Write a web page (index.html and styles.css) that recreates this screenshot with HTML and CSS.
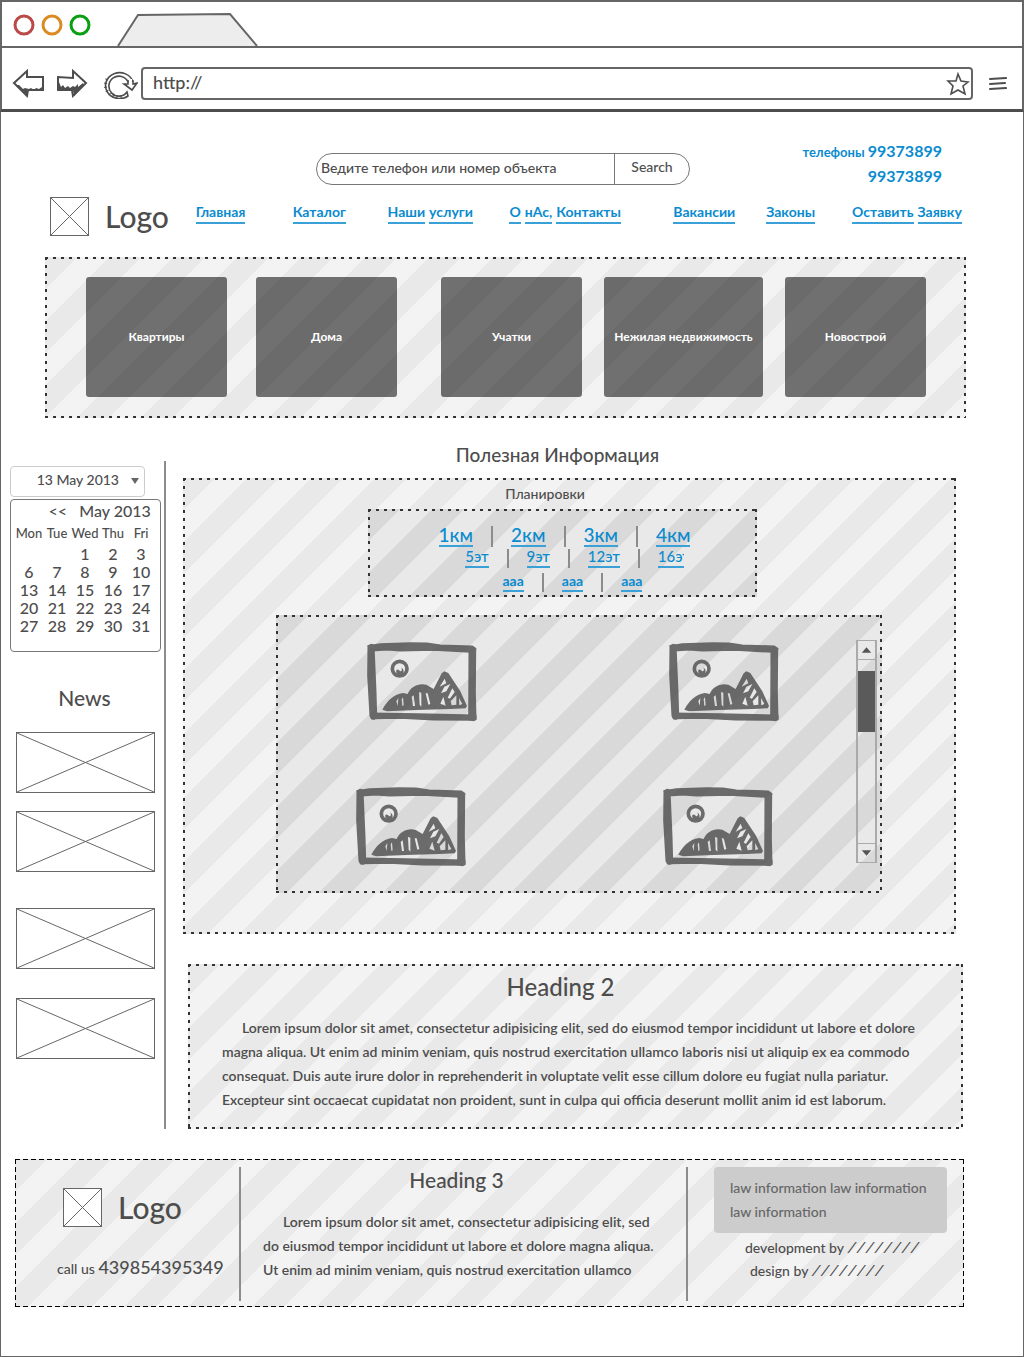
FILE: index.html
```html
<!DOCTYPE html>
<html lang="ru">
<head>
<meta charset="utf-8">
<meta name="viewport" content="width=device-width, initial-scale=1">
<title>Недвижимость</title>
<link rel="stylesheet" href="styles.css">
</head>
<body>
<svg class="defs" aria-hidden="true">
  <symbol id="cross" viewBox="0 0 100 100" preserveAspectRatio="none">
    <path d="M0 0L100 100M100 0L0 100" fill="none" stroke="#666" stroke-width="1" vector-effect="non-scaling-stroke"/>
  </symbol>
  <symbol id="picture" viewBox="0 0 330 240">
    <g fill="#505050" stroke="#505050" stroke-width="5" stroke-linejoin="round">
      <path d="M4 12L12 8L20 10L26 150L28 220L22 231L14 230L10 222L3 100Z"/>
      <path d="M4 12L40 6L130 3L180 4L220 10L316 13L326 20L324 28L310 30L200 24L100 26L60 23L15 26Z"/>
      <path d="M307 28L325 24L324 150L326 232L320 235L306 232Z"/>
      <path d="M12 214L150 216L326 220L326 232L320 234L200 233L100 228L18 229Z"/>
    </g>
    <path d="M46 203C60 178 78 157 108 153L122 156C130 134 155 122 178 128L200 141L224 94L232 88L244 93L280 148L300 192L296 199L250 201L150 204L60 208Z
      M134 164L138 192L144 192L140 160Z M156 150L158 188L163 194L163 152Z M176 154L184 188L190 186L182 154Z
      M233 110L218 134L238 124Z M250 126L232 134L222 154L238 148Z M256 139L242 167L249 170L263 150Z M268 160L251 178L254 190L268 188Z M229 164L220 185L236 191Z M286 186L276 168L277 190Z
      M88 178L94 168L92 192Z M104 172L108 166L110 190L106 192Z" fill="#505050" fill-rule="evenodd"/>
    <circle cx="98" cy="80" r="22" fill="none" stroke="#505050" stroke-width="11"/>
    <path d="M88 84C92 80 96 84 100 88C106 88 106 80 102 76C114 82 112 100 98 100C90 98 86 92 88 84Z" fill="#505050"/>
  </symbol>
</svg>

<header class="browser">
  <div class="tabs">
    <svg class="lights" viewBox="0 0 80 24" aria-hidden="true">
      <g fill="none" stroke-width="3">
        <circle cx="12" cy="12" r="9" stroke="#b94a48"/>
        <circle cx="40" cy="12" r="9" stroke="#dc8a22"/>
        <circle cx="68" cy="12" r="9" stroke="#0a9f10"/>
      </g>
    </svg>
    <svg class="tab" viewBox="0 0 142 34" aria-hidden="true">
      <path d="M1 33L21 2L113 1L140 33" fill="#ededed" stroke="#666" stroke-width="2"/>
    </svg>
  </div>
  <div class="toolbar">
    <svg class="nav-icon" viewBox="0 0 32 30" role="img" aria-label="Назад">
      <path d="M2 14L15 2L15 8L31 8L31 21L16 21L15 27Z" fill="none" stroke="#4d4d4d" stroke-width="2"/>
      <path d="M4 16L15 26L15 20L30 21L30 18L27 20L24 19L22 21L19 19L17 20L13 19L11 20L7 16Z" fill="#4d4d4d"/>
    </svg>
    <svg class="nav-icon forward" viewBox="0 0 32 30" role="img" aria-label="Вперёд">
      <path d="M30 14L17 2L17 9L2 8L2 21L16 21L17 27Z" fill="none" stroke="#4d4d4d" stroke-width="2"/>
      <path d="M3 21L3 13L5 18L7 16L9 19L12 17L14 19L17 17L19 18L22 15L22 18L27 14L28 16L18 27L17 21Z" fill="#4d4d4d"/>
    </svg>
    <svg class="reload" viewBox="0 0 34 30" role="img" aria-label="Обновить">
      <path d="M29 13A14 13 0 1 0 24 27L23 23A10 10 0 1 1 24 13" fill="none" stroke="#4d4d4d" stroke-width="1.6"/>
      <path d="M3 10A12 12 0 0 0 20 26" fill="none" stroke="#4d4d4d" stroke-width="3" stroke-dasharray="1 3"/>
      <path d="M20 15L24 15V12H29V15L33 14L28 21Z" fill="#fff" stroke="#4d4d4d" stroke-width="1.6"/>
      <path d="M25 10H28V15H25Z" fill="#fff"/>
    </svg>
    <div class="address">
      <input type="text" value="http://" aria-label="Адрес">
      <svg class="star" viewBox="0 0 24 24" aria-hidden="true">
        <path d="M12 2L15 9L22 10L17 14L19 22L12 18L5 22L7 14L2 9L10 9Z" fill="none" stroke="#4d4d4d" stroke-width="1.6"/>
      </svg>
    </div>
    <svg class="burger" viewBox="0 0 18 14" role="img" aria-label="Меню">
      <path d="M1 2L17 1M1 7L16 6M1 12L17 11" stroke="#4d4d4d" stroke-width="2" stroke-linecap="round"/>
    </svg>
  </div>
</header>

<div class="site">
  <div class="top">
    <form class="search">
      <input type="text" value="Ведите телефон или номер объекта" aria-label="Поиск">
      <button type="button">Search</button>
    </form>
    <div class="phones">
      <p>телефоны <span>99373899</span></p>
      <p><span>99373899</span></p>
    </div>
  </div>

  <div class="masthead">
    <div class="logo"><svg class="mark"><use href="#cross"/></svg><span>Logo</span></div>
    <nav class="menu">
      <a href="#">Главная</a>
      <a href="#">Каталог</a>
      <a href="#"><span>Наши</span> <span>услуги</span></a>
      <a href="#"><span>О</span> <span>нАс,</span> <span>Контакты</span></a>
      <a href="#">Вакансии</a>
      <a href="#">Законы</a>
      <a href="#"><span>Оставить</span> <span>Заявку</span></a>
    </nav>
  </div>

  <section class="kinds striped">
    <button type="button">Квартиры</button>
    <button type="button">Дома</button>
    <button type="button">Учатки</button>
    <button type="button">Нежилая недвижимость</button>
    <button type="button">Новострой</button>
  </section>

  <div class="columns">
    <aside class="sidebar">
      <button class="date" type="button"><span>13 May 2013</span><svg viewBox="0 0 8 6" aria-hidden="true"><path d="M0 0H8L4 6Z" fill="#666"/></svg></button>
      <div class="calendar">
        <p class="month">&lt;&lt;&nbsp;&nbsp; May 2013 &nbsp;&gt;&gt;</p>
        <table>
          <thead><tr><th>Mon</th><th>Tue</th><th>Wed</th><th>Thu</th><th>Fri</th><th>Sat</th><th>Sun</th></tr></thead>
          <tbody>
            <tr><td></td><td></td><td>1</td><td>2</td><td>3</td><td>4</td><td>5</td></tr>
            <tr><td>6</td><td>7</td><td>8</td><td>9</td><td>10</td><td>11</td><td>12</td></tr>
            <tr><td>13</td><td>14</td><td>15</td><td>16</td><td>17</td><td>18</td><td>19</td></tr>
            <tr><td>20</td><td>21</td><td>22</td><td>23</td><td>24</td><td>25</td><td>26</td></tr>
            <tr><td>27</td><td>28</td><td>29</td><td>30</td><td>31</td><td></td><td></td></tr>
          </tbody>
        </table>
      </div>
      <h2>News</h2>
      <div class="news">
        <svg><use href="#cross"/></svg>
        <svg><use href="#cross"/></svg>
        <svg><use href="#cross"/></svg>
        <svg><use href="#cross"/></svg>
      </div>
    </aside>

    <main>
      <h1>Полезная Информация</h1>
      <section class="plans striped">
        <h2>Планировки</h2>
        <div class="filters striped dark">
          <div class="filter rooms"><a href="#">1км</a><i></i><a href="#">2км</a><i></i><a href="#">3км</a><i></i><a href="#">4км</a></div>
          <div class="filter floors"><a href="#">5эт</a><i></i><a href="#">9эт</a><i></i><a href="#">12эт</a><i></i><a class="cut" href="#">16эт</a></div>
          <div class="filter misc"><a href="#">ааа</a><i></i><a href="#">ааа</a><i></i><a href="#">ааа</a></div>
        </div>
        <div class="gallery striped dark">
          <div class="pictures">
            <svg><use href="#picture"/></svg>
            <svg><use href="#picture"/></svg>
            <svg><use href="#picture"/></svg>
            <svg><use href="#picture"/></svg>
          </div>
          <div class="scrollbar">
            <svg viewBox="0 0 18 18" aria-hidden="true"><path d="M4 12H14L9 6Z" fill="#555"/></svg>
            <div class="track"><div class="thumb"></div></div>
            <svg viewBox="0 0 18 18" aria-hidden="true"><path d="M4 6H14L9 12Z" fill="#555"/></svg>
          </div>
        </div>
      </section>
      <section class="about striped">
        <h2>Heading 2</h2>
        <p>Lorem ipsum dolor sit amet, consectetur adipisicing elit, sed do eiusmod tempor incididunt ut labore et dolore<br>magna aliqua. Ut enim ad minim veniam, quis nostrud exercitation ullamco laboris nisi ut aliquip ex ea commodo<br>consequat. Duis aute irure dolor in reprehenderit in voluptate velit esse cillum dolore eu fugiat nulla pariatur.<br>Excepteur sint occaecat cupidatat non proident, sunt in culpa qui officia deserunt mollit anim id est laborum.</p>
      </section>
    </main>
  </div>

  <footer class="footer striped">
    <div class="contact">
      <div class="logo"><svg class="mark"><use href="#cross"/></svg><span>Logo</span></div>
      <p>call us <span>439854395349</span></p>
    </div>
    <div class="blurb">
      <h3>Heading 3</h3>
      <p>Lorem ipsum dolor sit amet, consectetur adipisicing elit, sed<br>do eiusmod tempor incididunt ut labore et dolore magna aliqua.<br>Ut enim ad minim veniam, quis nostrud exercitation ullamco</p>
    </div>
    <div class="legal">
      <p class="law">law information law information<br>law information</p>
      <p class="credit">development by <span>////////</span></p>
      <p class="credit design">design by <span>////////</span></p>
    </div>
  </footer>
</div>
</body>
</html>
```
FILE: styles.css
```css
* { box-sizing: border-box; }

body {
  margin: 0;
  background: #fff;
  color: #4d4d4d;
  font: 500 14px/24px Lato, "Liberation Sans", sans-serif;
}

h1, h2, h3, p { margin: 0; font-weight: inherit; }
a { color: #0a8bcf; }
button, input { font: inherit; color: inherit; background: none; border: 0; padding: 0; margin: 0; min-width: 0; }
svg { display: block; }
.defs { position: absolute; width: 0; height: 0; }

/* Browser frame */
.browser { border: 2px solid #666; border-bottom: 3px solid #4d4d4d; }
.tabs { display: flex; align-items: flex-end; height: 46px; border-bottom: 2px solid #666; padding-left: 10px; }
.lights { width: 80px; height: 24px; margin-bottom: 9px; }
.tab { width: 142px; height: 34px; margin-left: 25px; margin-bottom: -1px; }
.toolbar { display: flex; align-items: center; height: 61px; padding: 10px 15px 0 10px; }
.nav-icon { width: 32px; height: 30px; }
.forward { margin-left: 12px; }
.reload { width: 34px; height: 30px; margin-left: 16px; }
.address { flex: 1; display: flex; align-items: center; height: 33px; margin: 0 16px 0 3px; border: 2px solid #666; border-radius: 4px; padding: 0 1px 0 10px; }
.address input { flex: 1; padding-bottom: 3px; font-size: 18px; }
.star { width: 24px; height: 24px; }
.burger { width: 18px; height: 14px; }

/* Sketch fills: diagonal stripes inside a dashed outline */
.striped {
  --a: #e9e9e9;
  --b: #f3f3f3;
  --dash: #333 0 3px, transparent 3px 8px;
  --line: 2px;
  background:
    repeating-linear-gradient(90deg, var(--dash)) 0 0 / 100% var(--line) no-repeat,
    repeating-linear-gradient(90deg, var(--dash)) 0 100% / 100% var(--line) no-repeat,
    repeating-linear-gradient(180deg, var(--dash)) 0 0 / var(--line) 100% no-repeat,
    repeating-linear-gradient(180deg, var(--dash)) 100% 0 / var(--line) 100% no-repeat,
    linear-gradient(135deg, var(--a) 25%, var(--b) 25% 50%, var(--a) 50% 75%, var(--b) 75%) 0 0 / 64px 64px;
}
.striped.dark { --a: #d9d9d9; --b: #e9e9e9; }

.site { border: 1px solid #666; border-top: 0; padding: 27px 57px 49px 9px; }

/* Top row */
.top { display: grid; grid-template-columns: 306fr 374fr 252fr; padding: 0 24px 0 0; }
.search { grid-column: 2; display: flex; height: 32px; margin-top: 14px; border: 1px solid #777; border-radius: 16px; }
.search input { flex: 1; padding: 0 0 3px 4px; }
.search button { width: 75px; border-left: 1px solid #777; padding-bottom: 4px; }
.phones { color: #0a8bcf; font-weight: 700; font-size: 13px; text-align: right; line-height: 24px; }
.phones p { height: 25px; }
.phones span { font-size: 16px; }

.masthead { display: grid; grid-template-columns: 186fr 770fr; align-items: center; margin-top: 7px; padding-right: 1px; }
.masthead .logo { padding-left: 40px; }
.logo { display: flex; align-items: center; gap: 16px; font-size: 30px; line-height: 40px; }
.mark { width: 39px; height: 39px; border: 1px solid #666; background: #fff; }
.menu { display: grid; grid-template-columns: 97fr 95fr 122fr 164fr 93fr 86fr 113fr; padding-bottom: 6px; font-weight: 700; line-height: 20px; }
.menu a { display: flex; gap: 4px; justify-self: start; text-decoration: none; border-bottom: 2px solid #3aa0d8; white-space: nowrap; }
.menu a:has(span) { border: 0; }
.menu a span { border-bottom: 2px solid #3aa0d8; }

/* Property kinds */
.kinds { display: grid; grid-template-columns: 141fr 29fr 141fr 44fr 141fr 22fr 159fr 22fr 141fr; margin: 21px 0 0 35px; padding: 20px 40px 21px 41px; }
.kinds button { grid-row: 1; height: 120px; border-radius: 3px; background: rgba(0, 0, 0, .54); color: #fff; font-weight: 700; font-size: 12px; white-space: nowrap; }
.kinds button:nth-child(1) { grid-column: 1; }
.kinds button:nth-child(2) { grid-column: 3; }
.kinds button:nth-child(3) { grid-column: 5; }
.kinds button:nth-child(4) { grid-column: 7; }
.kinds button:nth-child(5) { grid-column: 9; }

/* Sidebar */
.columns { display: flex; margin-top: 23px; }
.sidebar { width: 156px; flex: none; margin-top: 20px; padding-top: 5px; border-right: 2px solid #8c8c8c; }
.date { display: flex; align-items: center; justify-content: flex-end; gap: 12px; width: 135px; height: 31px; border: 1px solid #ccc; border-radius: 4px; padding: 0 5px 4px 0; }
.date svg { width: 8px; height: 6px; margin-top: 3px; }
.calendar { width: 151px; height: 153px; margin-top: 2px; overflow: hidden; border: 1px solid #777; border-radius: 4px; padding: 1px 0 0 4px; }
.month { width: 196px; text-align: center; font-size: 16px; line-height: 20px; }
.calendar table { table-layout: fixed; width: 196px; border-collapse: collapse; text-align: center; }
.calendar th { padding: 0; font-size: 13px; font-weight: inherit; line-height: 24px; }
.calendar td { padding: 0; height: 18px; font-size: 16px; line-height: 18px; }
.calendar th:nth-child(n+6), .calendar td:nth-child(n+6) { color: #b94a48; }
.sidebar h2 { margin-top: 30px; padding-right: 5px; font-size: 21px; line-height: 32px; text-align: center; }
.news { display: grid; grid-template-rows: 79px 97px 90px 61px; margin: 18px 9px 0 6px; }
.news svg { width: 100%; height: 61px; border: 1px solid #666; }

/* Main column */
main { flex: 1; min-width: 0; padding-left: 17px; }
h1 { margin-right: 34px; font-size: 19px; line-height: 28px; text-align: center; }
.plans { margin: 9px 10px 0 0; padding: 5px 74px 41px 93px; }
.plans h2 { padding-right: 68px; font-size: 14px; line-height: 22px; text-align: center; }
.filters { margin: 4px 125px 0 92px; height: 88px; padding: 15px 0 0 0; }
.filter { display: flex; justify-content: center; }
.filter a { text-decoration: none; border-bottom: 2px solid #3aa0d8; white-space: nowrap; }
.filter i { width: 2px; margin: 2px 18px 0; background: #8c8c8c; }
.rooms { padding-left: 4px; font-size: 19px; line-height: 21px; }
.floors { padding-left: 24px; font-size: 15px; line-height: 19px; }
.floors .cut { width: 26px; overflow: hidden; }
.misc { padding: 3px 0 0 20px; font-weight: 700; line-height: 19px; }
.gallery { display: flex; margin-top: 18px; padding: 25px 5px 26px 80px; }
.pictures { flex: 1; display: grid; grid-template-columns: 1fr 1fr; row-gap: 65px; align-content: start; opacity: .82; padding-top: 2px; }
.pictures svg { width: 110px; height: 80px; margin-left: 11px; }
.pictures svg:nth-child(n+3) { margin-left: 0; }
.pictures svg:nth-child(2) { margin-left: 63px; }
.pictures svg:nth-child(4) { margin-left: 57px; }
.scrollbar { display: flex; flex-direction: column; width: 21px; height: 223px; border: 1px solid #aaa; border-width: 1px 2px; }
.scrollbar svg { height: 18px; width: 17px; }
.track { flex: 1; border: solid #aaa; border-width: 1px 0; }
.thumb { height: 61px; margin-top: 11px; background: #5a5a5a; }

.about { margin: 30px 3px 0 5px; padding: 8px 20px 17px 34px; }
.about h2 { padding-right: 44px; font-size: 24px; line-height: 30px; text-align: center; }
.about p { margin-top: 14px; text-indent: 20px; font-weight: 600; white-space: nowrap; }

/* Footer */
.footer { --line: 1px; --dash: #000 0 5px, transparent 5px 8px; display: grid; grid-template-columns: minmax(0, 226fr) minmax(0, 447fr) minmax(0, 276fr); margin: 30px 2px 0 5px; padding: 8px 0 6px; height: 148px; }
.contact { border-right: 2px solid #8c8c8c; padding: 20px 0 0 42px; }
.contact .logo { padding-left: 6px; }
.contact p { margin-top: 28px; white-space: nowrap; }
.contact p span { font-size: 18px; }
.blurb { border-right: 2px solid #8c8c8c; padding-left: 22px; }
.blurb h3 { padding-right: 36px; font-size: 21px; line-height: 26px; text-align: center; }
.blurb p { margin-top: 17px; text-indent: 20px; font-weight: 600; white-space: nowrap; }
.legal { padding: 0 17px 0 26px; }
.law { padding: 9px 16px; border-radius: 4px; background: #ccc; color: #666; white-space: nowrap; }
.credit { height: 23px; padding-left: 31px; margin-top: 3px; line-height: 23px; white-space: nowrap; }
.credit span { font: italic 15px/20px "Liberation Mono", monospace; }
.design { padding-left: 36px; margin-top: 0; }
```
